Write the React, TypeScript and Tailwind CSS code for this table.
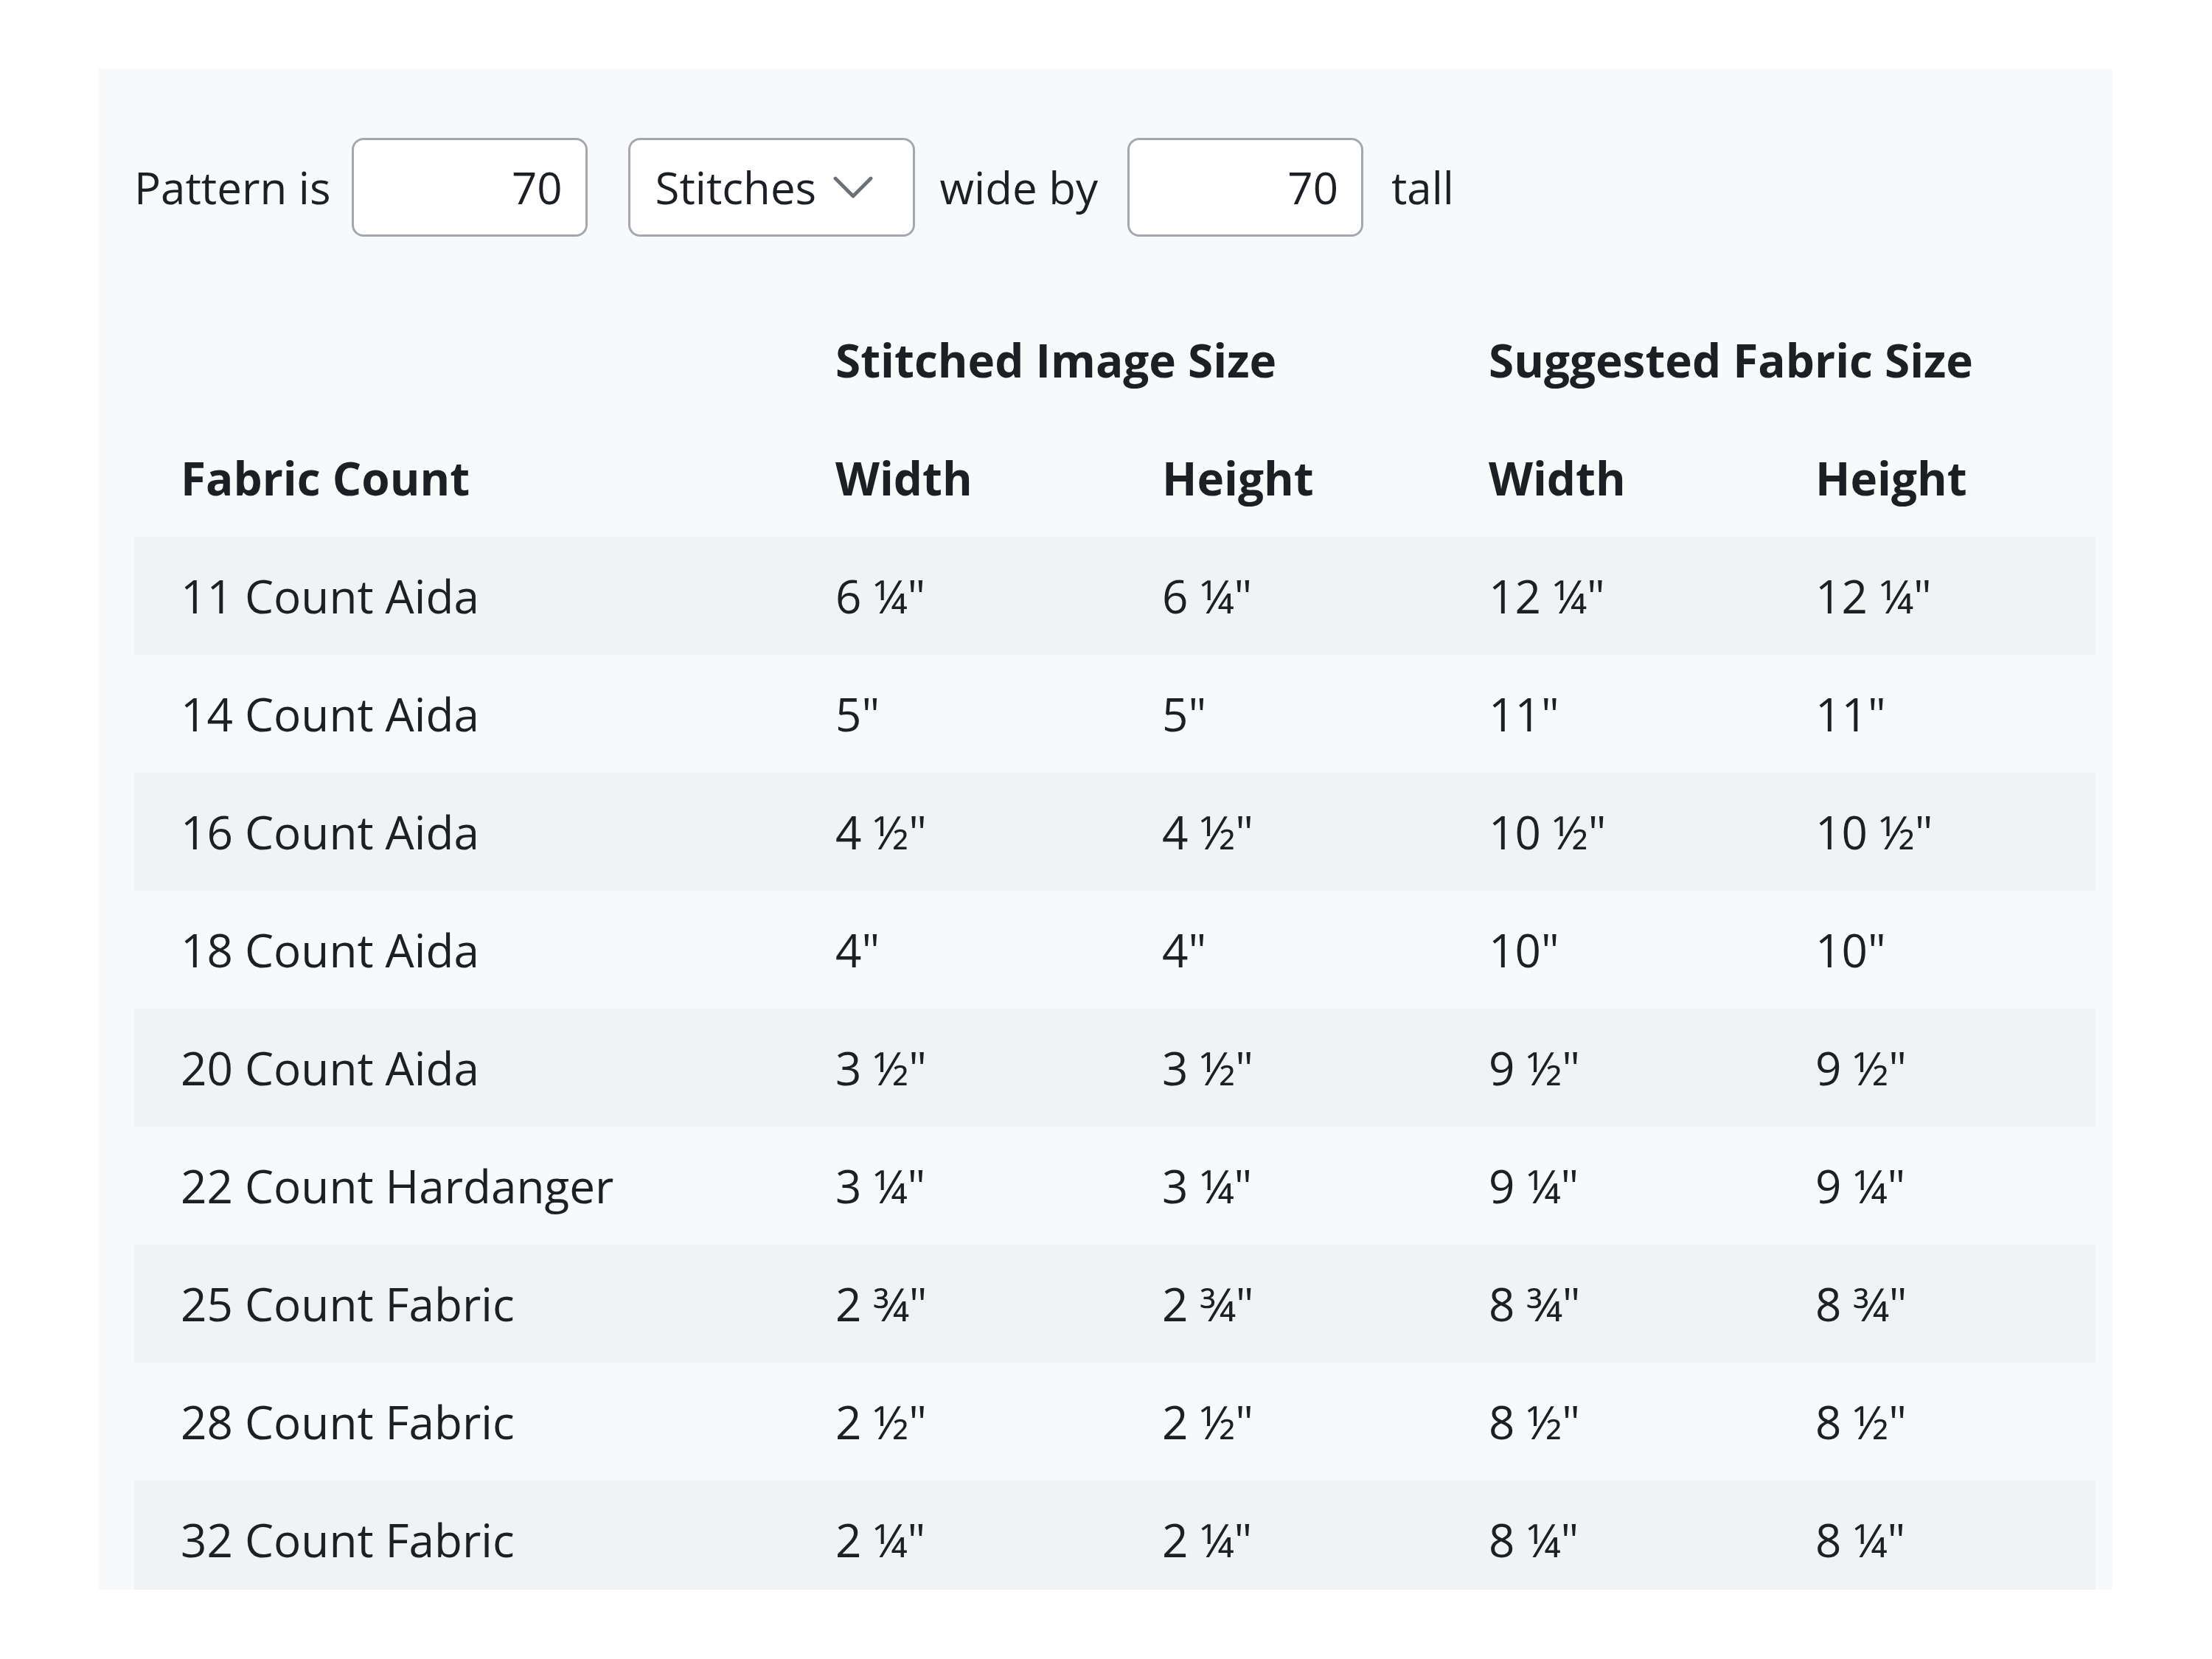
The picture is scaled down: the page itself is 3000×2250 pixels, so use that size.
import { LuChevronDown } from "react-icons/lu";

type Row = { fabric: string; width: string; height: string; fabricWidth: string; fabricHeight: string };

const rows: Row[] = [
    { fabric: "11 Count Aida", width: "6 ¼\"", height: "6 ¼\"", fabricWidth: "12 ¼\"", fabricHeight: "12 ¼\"" },
    { fabric: "14 Count Aida", width: "5\"", height: "5\"", fabricWidth: "11\"", fabricHeight: "11\"" },
    { fabric: "16 Count Aida", width: "4 ½\"", height: "4 ½\"", fabricWidth: "10 ½\"", fabricHeight: "10 ½\"" },
    { fabric: "18 Count Aida", width: "4\"", height: "4\"", fabricWidth: "10\"", fabricHeight: "10\"" },
    { fabric: "20 Count Aida", width: "3 ½\"", height: "3 ½\"", fabricWidth: "9 ½\"", fabricHeight: "9 ½\"" },
    { fabric: "22 Count Hardanger", width: "3 ¼\"", height: "3 ¼\"", fabricWidth: "9 ¼\"", fabricHeight: "9 ¼\"" },
    { fabric: "25 Count Fabric", width: "2 ¾\"", height: "2 ¾\"", fabricWidth: "8 ¾\"", fabricHeight: "8 ¾\"" },
    { fabric: "28 Count Fabric", width: "2 ½\"", height: "2 ½\"", fabricWidth: "8 ½\"", fabricHeight: "8 ½\"" },
    { fabric: "32 Count Fabric", width: "2 ¼\"", height: "2 ¼\"", fabricWidth: "8 ¼\"", fabricHeight: "8 ¼\"" },
];

const cell = "h-[160px] pl-[63px] text-left align-middle";

const App = () => {
    return (
        <div className="min-h-screen bg-white pt-[93px] pl-[134px] text-[#1c1f23] font-['Open_Sans',sans-serif]">
            <div className="w-[2731px] h-[2063px] overflow-hidden bg-[#f8f9fa] pl-[48px] pr-[23px] pt-[94px]">
                <div className="flex items-center h-[134px] text-[60px]">
                    <span>Pattern is</span>
                    <input
                        readOnly
                        value="70"
                        className="ml-[28px] w-[320px] h-[134px] rounded-[16px] border-[3px] border-[#a4a8ad] bg-white pr-[31px] text-right outline-none"
                    />
                    <div className="ml-[55px] w-[389px] h-[134px] rounded-[16px] border-[3px] border-[#a4a8ad] bg-white pl-[34px] pr-[33px] flex items-center justify-between">
                        <span>Stitches</span>
                        <LuChevronDown className="w-[96px] h-[96px] text-[#6b7075]" strokeWidth={1.2} />
                    </div>
                    <span className="ml-[34px]">wide by</span>
                    <input
                        readOnly
                        value="70"
                        className="ml-[40px] w-[320px] h-[134px] rounded-[16px] border-[3px] border-[#a4a8ad] bg-white pr-[31px] text-right outline-none"
                    />
                    <span className="ml-[38px]">tall</span>
                </div>

                <table className="mt-[87px] w-[2660px] table-fixed border-collapse text-[62px]">
                    <colgroup>
                        <col className="w-[888px]" />
                        <col className="w-[443px]" />
                        <col className="w-[443px]" />
                        <col className="w-[443px]" />
                        <col className="w-[443px]" />
                    </colgroup>
                    <thead className="font-bold">
                        <tr>
                            <th className={cell}></th>
                            <th colSpan={2} className={cell}>Stitched Image Size</th>
                            <th colSpan={2} className={cell}>Suggested Fabric Size</th>
                        </tr>
                        <tr>
                            <th className={cell}>Fabric Count</th>
                            <th className={cell}>Width</th>
                            <th className={cell}>Height</th>
                            <th className={cell}>Width</th>
                            <th className={cell}>Height</th>
                        </tr>
                    </thead>
                    <tbody>
                        {rows.map((row, i) => (
                            <tr key={row.fabric} className={i % 2 === 0 ? "bg-[#f1f2f3]" : ""}>
                                <td className={cell}>{row.fabric}</td>
                                <td className={cell}>{row.width}</td>
                                <td className={cell}>{row.height}</td>
                                <td className={cell}>{row.fabricWidth}</td>
                                <td className={cell}>{row.fabricHeight}</td>
                            </tr>
                        ))}
                    </tbody>
                </table>
            </div>
        </div>
    );
}

export default App;
